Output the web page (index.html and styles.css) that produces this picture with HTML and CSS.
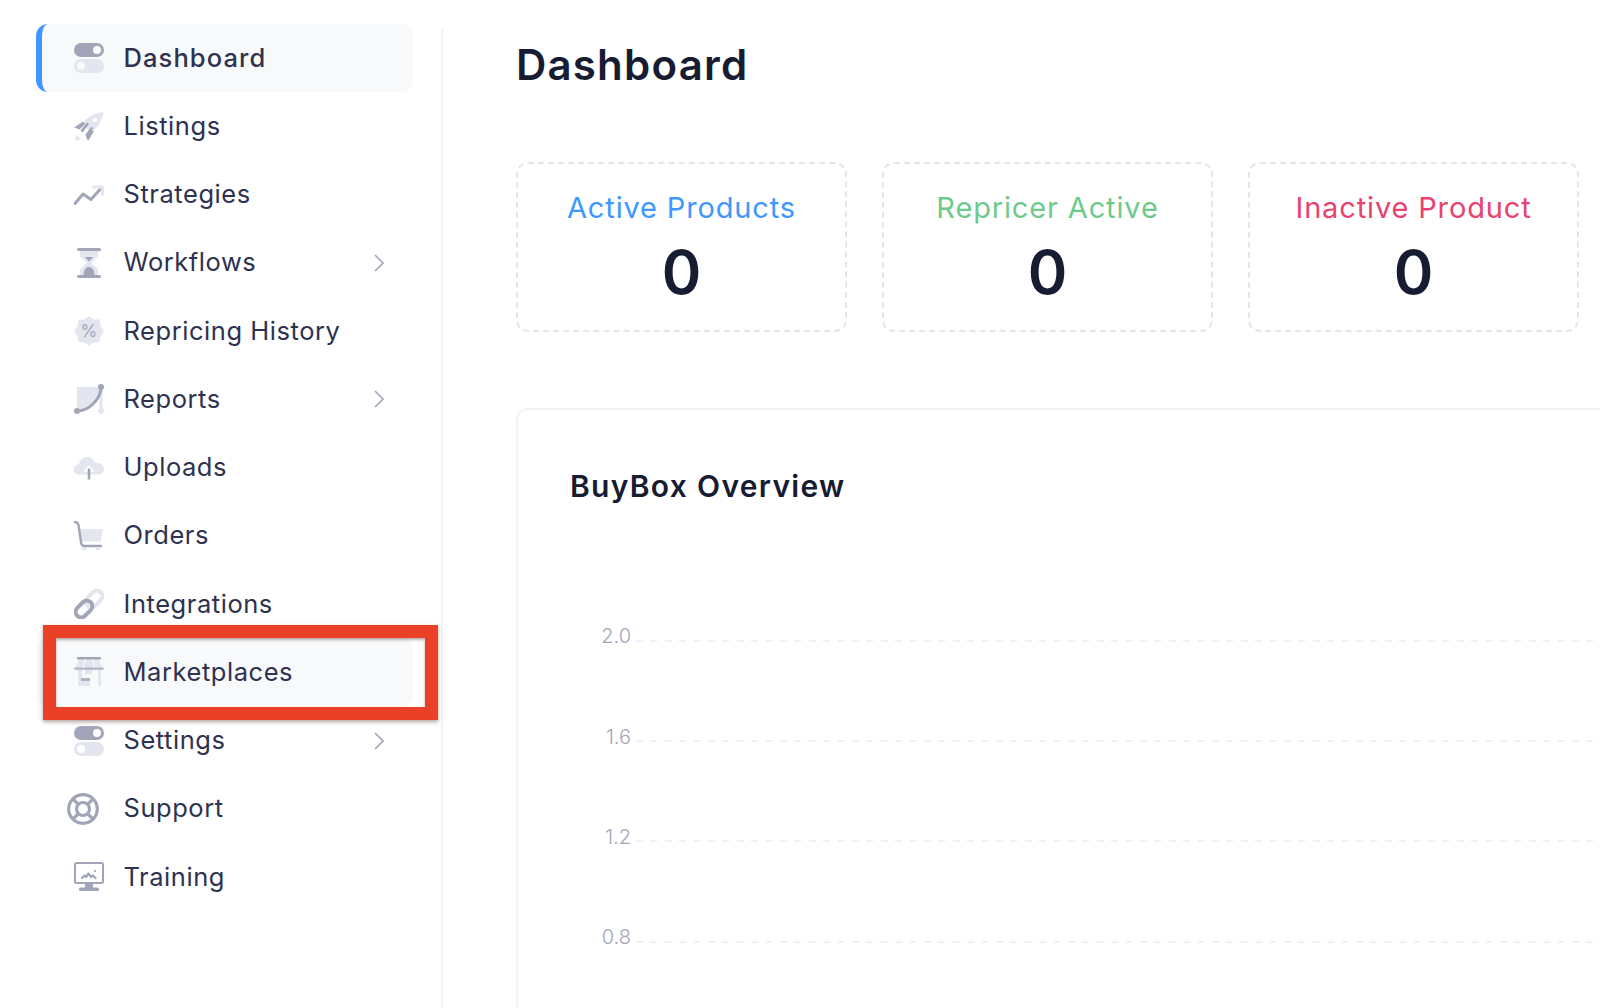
FILE: index.html
```html
<!DOCTYPE html>
<html lang="en">
<head>
<meta charset="utf-8">
<title>Dashboard</title>
<link rel="stylesheet" href="styles.css">
</head>
<body>
<div class="page">
  <aside class="sidebar">
    <nav class="nav">
      <a class="nav-item is-active">
        <svg class="icon" viewBox="0 0 30 30"><rect class="dark" width="30" height="14" rx="7"/><circle class="hole" cx="23" cy="7" r="4"/><rect class="light" y="16" width="30" height="14" rx="7"/><circle class="hole-soft" cx="7" cy="23" r="4"/></svg>
        <span class="nav-label">Dashboard</span>
      </a>
      <a class="nav-item">
        <svg class="icon" viewBox="0 0 30 30"><path class="light" d="M29.500 1C20 2 13 6 8.500 13L17 21.500C24 17 28 10 29.500 1Z"/><circle class="hole" cx="21" cy="9" r="2.200"/><path class="dark" d="M9 10.500L0 16.500L5.500 18.500L11 13ZM20 20L14 30L11.500 24.500L17 19ZM6.500 19.500L13 11.500L15 13L8.500 21.500ZM11.500 23.500L17.500 15.500L19 17.500L13.500 25Z"/><path class="light" d="M2 24L7 28L1 30Z"/></svg>
        <span class="nav-label">Listings</span>
      </a>
      <a class="nav-item">
        <svg class="icon" viewBox="0 0 30 30"><path class="line-dark" d="M1 23.500L9 14L17 19.500L26 9.500"/><path class="line-light" d="M19.500 7H28.500V14.500"/></svg>
        <span class="nav-label">Strategies</span>
      </a>
      <a class="nav-item">
        <svg class="icon" viewBox="0 0 30 30"><path class="light" d="M6 3H24V8.500L17 15L24 21.500V27H6V21.500L13 15L6 8.500Z"/><rect class="dark" x="3" width="24" height="3" rx="1.500"/><rect class="dark" x="3" y="27" width="24" height="3" rx="1.500"/><path class="dark" d="M11 9H19L15 13.500ZM9.500 27C9.500 22 12 19 15 19C18 19 20.500 22 20.500 27Z"/></svg>
        <span class="nav-label">Workflows</span>
        <svg class="chevron" viewBox="0 0 10 18"><path d="M1 1L9 9L1 17"/></svg>
      </a>
      <a class="nav-item">
        <svg class="icon" viewBox="0 0 30 30"><path class="light" d="M15 0L19.500 3.500L25.500 3.500L26.500 9.500L30 15L26.500 20L25.500 26L19.500 26.500L15 30L10.500 26.500L4.500 26L3.500 20L0 15L3.500 9.500L4.500 3.500L10.500 3.500Z"/><text class="percent" x="15" y="21">%</text></svg>
        <span class="nav-label">Repricing History</span>
      </a>
      <a class="nav-item">
        <svg class="icon" viewBox="0 0 30 30"><path class="light" d="M3 3H27C27 15 15 27 3 27Z"/><path class="line-light" d="M27 3V27"/><circle class="light" cx="27" cy="27" r="3"/><path class="line-dark" d="M3 27C15 27 27 15 27 3"/><circle class="dark" cx="3" cy="27" r="3"/><circle class="dark" cx="27" cy="3" r="3"/></svg>
        <span class="nav-label">Reports</span>
        <svg class="chevron" viewBox="0 0 10 18"><path d="M1 1L9 9L1 17"/></svg>
      </a>
      <a class="nav-item">
        <svg class="icon" viewBox="0 0 30 30"><path class="light" d="M5 21.500C2 21.500 0 19.500 0 16.500C0 13.500 2 11.500 5 11.500C5.500 7 9 4 13 4C16.500 4 19.500 6 20.500 9.500C25.500 9.500 30 12.500 30 16C30 19 27.500 21.500 24.500 21.500Z"/><path class="hole" d="M15 12L21 19H9Z"/><path class="stem" d="M15 15.500V26.500"/></svg>
        <span class="nav-label">Uploads</span>
      </a>
      <a class="nav-item">
        <svg class="icon" viewBox="0 0 30 30"><path class="light" d="M6 8H29L26.500 20.500H8.500Z"/><path class="line-dark thin" d="M1 1C3 1 4 2 4.500 4L7 21C7.200 23.500 8 25 10 25H27"/><path class="line-light thin" d="M9 27.500H11M23 27.500H25"/></svg>
        <span class="nav-label">Orders</span>
      </a>
      <a class="nav-item">
        <svg class="icon" viewBox="0 0 30 30"><rect class="link-light" x="-9.500" y="-5.500" width="19" height="11" rx="5.500" transform="translate(20 10) rotate(-45)"/><rect class="link-dark" x="-9.500" y="-5.500" width="19" height="11" rx="5.500" transform="translate(10 20) rotate(-45)"/></svg>
        <span class="nav-label">Integrations</span>
      </a>
      <a class="nav-item is-marked">
        <svg class="icon" viewBox="0 0 30 30"><path class="light" d="M6 1H24L28.500 11H1.500Z"/><path class="light" d="M4 12H8V21H4ZM24 12H27V29H24ZM11 12H18V17H11Z"/><path class="light" d="M4 21H16V29H4Z"/><rect class="dark" x="3" width="24" height="2.600" rx="1.200"/><rect class="dark soft" y="10.500" width="30" height="2.200" rx="1.100"/><rect class="dark soft" x="7" y="21" width="9" height="3"/><path class="line-hole" d="M11 2.500L9.500 10.500M19 2.500L20.500 10.500"/></svg>
        <span class="nav-label">Marketplaces</span>
        <span class="callout"></span>
      </a>
      <a class="nav-item">
        <svg class="icon" viewBox="0 0 30 30"><rect class="dark" width="30" height="14" rx="7"/><circle class="hole" cx="23" cy="7" r="4"/><rect class="light" y="16" width="30" height="14" rx="7"/><circle class="hole" cx="7" cy="23" r="4"/></svg>
        <span class="nav-label">Settings</span>
        <svg class="chevron" viewBox="0 0 10 18"><path d="M1 1L9 9L1 17"/></svg>
      </a>
      <a class="nav-item">
        <svg class="icon icon-wide" viewBox="0 0 32 32"><circle class="ring" cx="16" cy="16" r="14.300"/><circle class="ring" cx="16" cy="16" r="6.500"/><path class="ring" d="M6 6L11.400 11.400M26 6L20.600 11.400M6 26L11.400 20.600M26 26L20.600 20.600"/></svg>
        <span class="nav-label">Support</span>
      </a>
      <a class="nav-item">
        <svg class="icon" viewBox="0 0 30 30"><rect class="screen" x="1" y="1" width="28" height="20" rx="1.500"/><path class="spark" d="M8 16L10.500 13.500L12 15L14.500 11.500L17 15L19 13.500L21.500 16M21 9H21.100"/><rect class="dark" x="11" y="21" width="8" height="5"/><rect class="dark" x="5" y="25.500" width="20" height="3.500" rx="1.500"/></svg>
        <span class="nav-label">Training</span>
      </a>
    </nav>
  </aside>

  <main class="main">
    <h1 class="title">Dashboard</h1>
    <section class="stats">
      <div class="stat"><div class="stat-label is-blue">Active Products</div><div class="stat-value">0</div></div>
      <div class="stat"><div class="stat-label is-green">Repricer Active</div><div class="stat-value">0</div></div>
      <div class="stat"><div class="stat-label is-red">Inactive Product</div><div class="stat-value">0</div></div>
    </section>
    <section class="panel">
      <h2 class="panel-title">BuyBox Overview</h2>
      <div class="chart">
        <div class="tick"><span class="tick-label">2.0</span><span class="tick-line"></span></div>
        <div class="tick"><span class="tick-label">1.6</span><span class="tick-line"></span></div>
        <div class="tick"><span class="tick-label">1.2</span><span class="tick-line"></span></div>
        <div class="tick"><span class="tick-label">0.8</span><span class="tick-line"></span></div>
      </div>
    </section>
  </main>
</div>
</body>
</html>
```
FILE: styles.css
```css
* { box-sizing: border-box; }
html, body { margin: 0; height: 100%; }
body {
  background: #fff;
  color: #2e3250;
  font-family: Inter, "Noto Sans", "Liberation Sans", sans-serif;
  overflow: hidden;
}
.page { display: flex; height: 1008px; overflow: hidden; }

/* Sidebar */
.sidebar {
  flex: 0 0 443px;
  margin-top: 29px;
  border-right: 2px solid #f1f2f6;
}
.nav { display: flex; flex-direction: column; margin: -5px 0 0 36px; width: 377px; }
.nav-item {
  position: relative;
  display: flex;
  align-items: center;
  gap: 19.500px;
  height: 68.25px;
  padding: 0 29px 0 38px;
  font-size: 25.500px;
  letter-spacing: .55px;
  border-radius: 12px;
}
.nav-item.is-active {
  padding-left: 32px;
  border-left: 6px solid #3e97ff;
  background: #f8f9fb;
  font-weight: 500;
  letter-spacing: 1.1px;
}
.nav-item.is-marked { background: #f8f9fb; }
.nav-label { white-space: nowrap; margin-top: -2px; }
.icon { flex: 0 0 30px; width: 30px; height: 30px; display: block; }
.icon-wide { flex: 0 0 32px; width: 32px; height: 32px; margin: 0 5px 0 -7px; }
.chevron {
  margin-left: auto;
  width: 10px;
  height: 18px;
  fill: none;
  stroke: #a1a5b7;
  stroke-width: 1.6;
}
.callout {
  position: absolute;
  left: 7px;
  top: -13px;
  width: 395px;
  height: 95px;
  border: 13px solid #ea4025;
  box-shadow: 0 2px 4px rgba(60, 20, 10, .4), inset 0 2px 3px rgba(60, 20, 10, .35);
}

/* Icon paint */
.dark { fill: #a1a5b7; }
.light { fill: #e4e6ef; }
.soft { opacity: .8; }
.hole { fill: #fff; }
.hole-soft { fill: #f8f9fb; }
.line-dark, .line-light, .stem, .ring, .spark, .line-hole {
  fill: none;
  stroke-linecap: round;
  stroke-linejoin: round;
}
.line-dark { stroke: #a1a5b7; stroke-width: 3; }
.line-dark.thin { stroke-width: 2.400; }
.line-light { stroke: #e4e6ef; stroke-width: 3; }
.line-light.thin { stroke-width: 3; }
.line-hole { stroke: #f8f9fb; stroke-width: 1.200; }
.stem { stroke: #a1a5b7; stroke-width: 2.600; stroke-linecap: butt; }
.ring { stroke: #a1a5b7; stroke-width: 3.200; stroke-linecap: butt; }
.spark { stroke: #a1a5b7; stroke-width: 2.200; }
.screen { fill: #fff; stroke: #a1a5b7; stroke-width: 2; }
.link-light { fill: none; stroke: #e4e6ef; stroke-width: 4; }
.link-dark { fill: none; stroke: #a1a5b7; stroke-width: 4; }
.percent { fill: #a1a5b7; font-size: 17px; text-anchor: middle; }

/* Main */
.main { flex: 1; min-width: 0; padding-left: 73px; }
.title {
  margin: 36px 0 0;
  font-size: 42px;
  line-height: 58px;
  font-weight: 600;
  letter-spacing: 1.2px;
  color: #181c32;
}
.stats { display: flex; gap: 35px; margin-top: 68px; }
.stat {
  flex: 0 0 331px;
  height: 170px;
  border: 2px dashed #e4e6ef;
  border-radius: 12px;
  text-align: center;
  padding-top: 24px;
}
.stat-label { font-size: 29px; line-height: 40px; letter-spacing: .85px; }
.stat-value { font-size: 60px; line-height: 76px; font-weight: 600; color: #181c32; margin-top: 6px; }
.is-blue { color: #3e97ff; }
.is-green { color: #6ec98c; }
.is-red { color: #e8436e; }

.panel {
  width: 1200px;
  height: 760px;
  margin-top: 76px;
  padding: 55px 52px 0;
  border: 2px solid #f1f2f6;
  border-radius: 12px;
}
.panel-title {
  margin: 0;
  font-size: 30px;
  line-height: 42px;
  font-weight: 600;
  letter-spacing: 1.3px;
  color: #181c32;
}
.chart { margin-top: 79px; }
.tick { display: flex; align-items: center; gap: 5px; height: 100.4px; }
.tick-label {
  flex: 0 0 61px;
  text-align: right;
  font-size: 20px;
  font-weight: 300;
  color: #a1a5b7;
}
.tick-line {
  flex: 1;
  height: 2px;
  margin-top: 9px;
  background: repeating-linear-gradient(90deg, #eff2f5 0 7px, transparent 7px 14.4px);
}
```
